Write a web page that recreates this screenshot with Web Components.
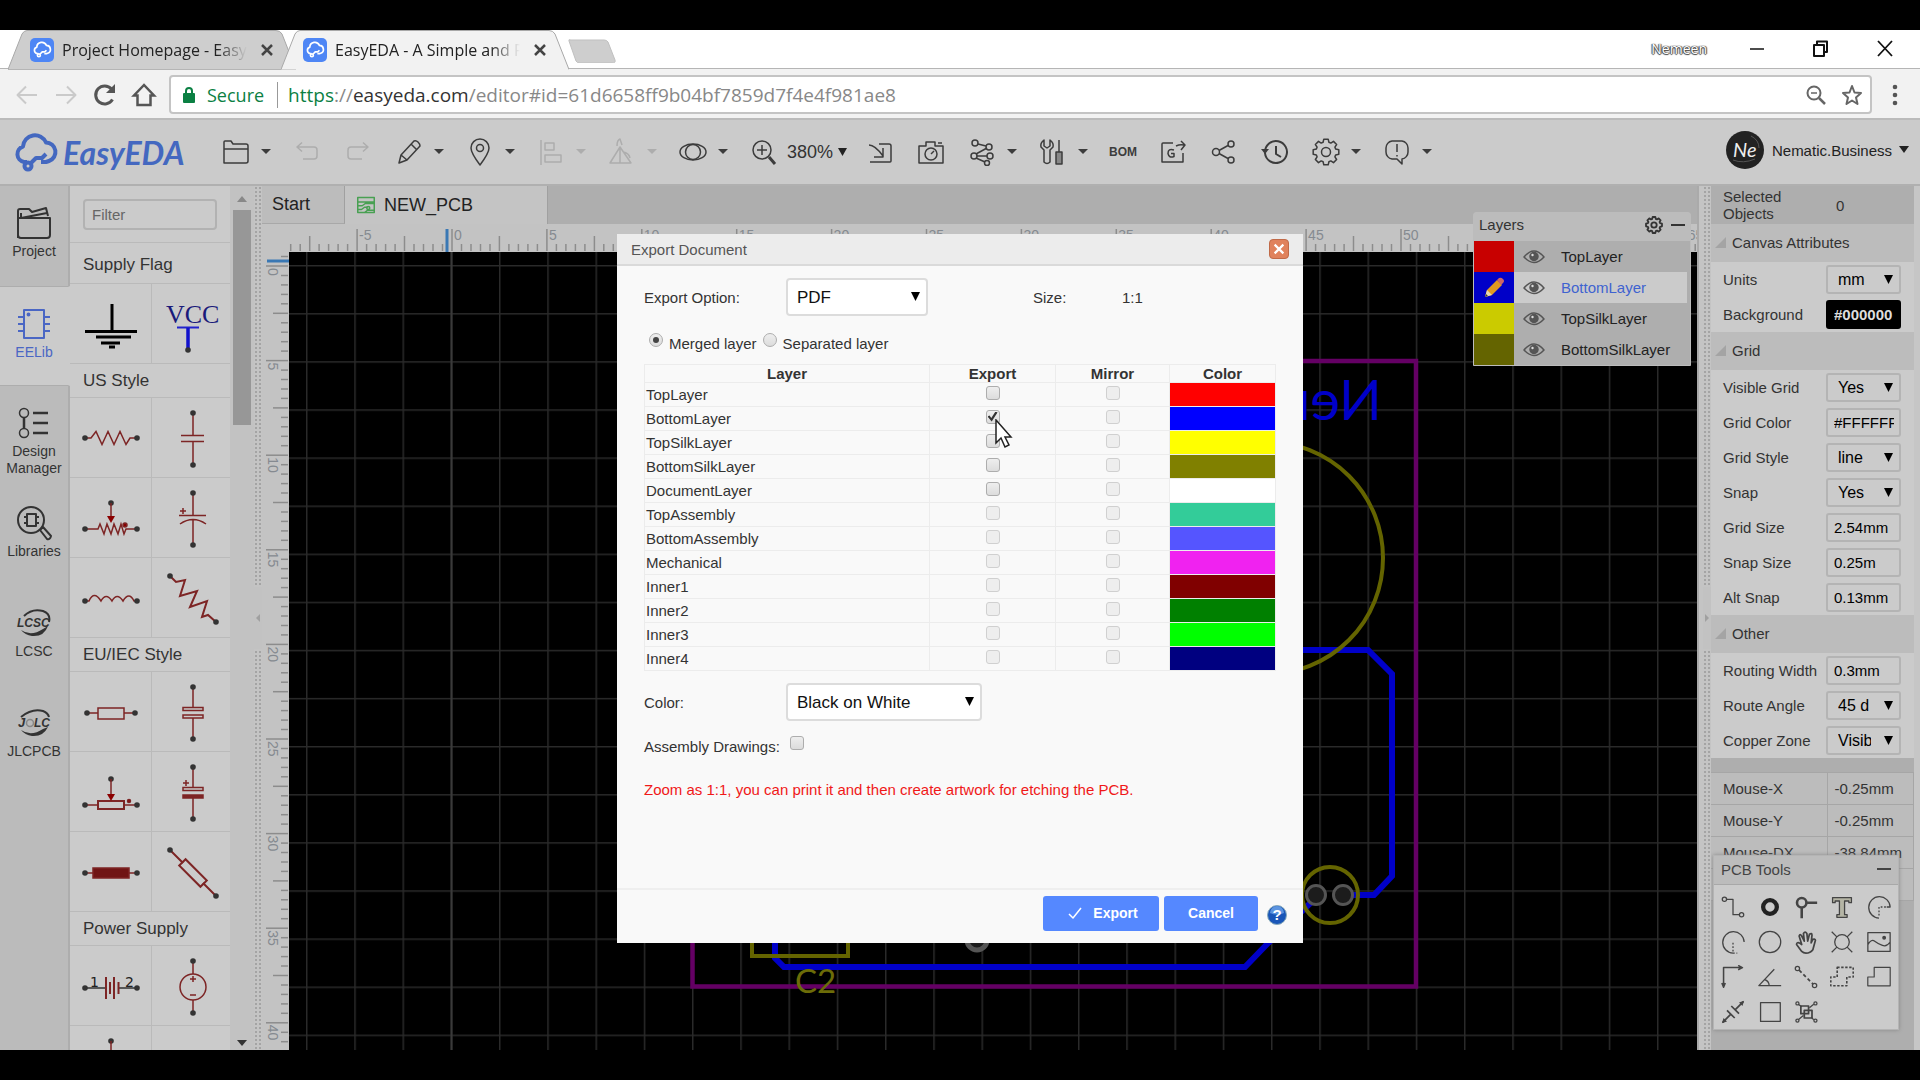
<!DOCTYPE html>
<html lang="en">
<head>
<meta charset="utf-8">
<title>EasyEDA - A Simple and Powerful Electronic Circuit Design Tool</title>
<style>
  html, body { height: 100%; margin: 0; background: #000; }
  body { font-family: "Liberation Sans", Arial, sans-serif; font-size: 15px; color: #333; }
</style>
</head>
<body>
<easy-app></easy-app>
<script>
const BASE = `<style>
  :host, *, *::before, *::after { box-sizing: border-box; }
  button, input, select { font: inherit; color: inherit; margin: 0; }
  button { background: none; border: 0; padding: 0; display: flex; align-items: center; }
  svg { display: block; }
</style>`;

function define(name, render, ready) {
  customElements.define(name, class extends HTMLElement {
    connectedCallback() {
      if (this.shadowRoot) return;
      this.attachShadow({ mode: "open" }).innerHTML = BASE + render(this);
      if (ready) ready(this, this.shadowRoot);
    }
  });
}

/* ---------- icons ---------- */
const gear = (r, c) => {
  let d = "";
  for (let i = 0; i < 8; i++) {
    [[-0.29, r * 0.78], [-0.17, r], [0.17, r], [0.29, r * 0.78]].forEach(([o, q]) => {
      const a = i * Math.PI / 4 + o;
      d += (d ? "L" : "M") + (c + q * Math.sin(a)).toFixed(2) + " " + (c - q * Math.cos(a)).toFixed(2);
    });
  }
  return d + "Z";
};
const cloud = `<path d="M13 30H10a8 8 0 0 1-1-15.500a12 12 0 0 1 23-4a9.500 9.500 0 0 1 3 18.500l-3 1h-5"/><circle cx="14" cy="34" r="3.500"/><path d="M17 31l5-5h6l4-4" />`;
const ICONS = {
  back: [28, `<path d="M24 14H5M13 5.500L4.500 14l8.500 8.500" stroke-width="2"/>`],
  forward: [28, `<path d="M4 14h19M15 5.500l8.500 8.500l-8.500 8.500" stroke-width="2"/>`],
  reload: [28, `<path d="M21.500 18.500A9 9 0 1 1 20.500 8" stroke-width="3"/><path d="M24 3v9h-9z" fill="currentColor" stroke="none"/>`],
  home: [28, `<path d="M14 4L4 14.500h3.500V24h13v-9.500H24z" stroke-width="2.500" stroke-linejoin="miter"/>`],
  lock: [20, `<rect x="4" y="8" width="12" height="10" rx="1" fill="currentColor" stroke="none"/><path d="M7 9V6a3 3 0 0 1 6 0v3" stroke-width="2"/>`],
  lens: [24, `<circle cx="10" cy="10" r="6.500" stroke-width="2"/><path d="M15 15l6 6" stroke-width="2.500"/><path d="M7 10h6"/>`],
  star: [24, `<path d="M12 3l2.500 6.500l6.500.5l-5 4.500l1.500 6.500L12 17.500L6.500 21L8 14.500L3 10l6.500-.5z" stroke-width="2"/>`],
  dots: [24, `<g fill="currentColor" stroke="none"><circle cx="12" cy="4" r="2.300"/><circle cx="12" cy="12" r="2.300"/><circle cx="12" cy="20" r="2.300"/></g>`],
  min: [24, `<path d="M5 12h14" stroke-width="1.500"/>`],
  restore: [24, `<path d="M5 8h10v11H5zM8 8V4.500h10V15h-3" stroke-width="2"/>`],
  close: [24, `<path d="M5 4l14 15M19 4L5 19" stroke-width="1.800"/>`],
  x: [16, `<path d="M3 3l10 10M13 3L3 13" stroke-width="2.500"/>`],
  favicon: [24, `<rect width="24" height="24" rx="5" fill="#4e86f5" stroke="none"/><g transform="translate(3 3) scale(.42)" stroke="#fff" stroke-width="4">${cloud}</g>`],
  folder: [28, `<path d="M2 25V4q0-1 1-1h6l2 3h13q2 0 2 2v15q0 2-2 2zM2 11h24"/>`],
  undo: [28, `<path d="M4 9h17q3 0 3 3v6q0 3-3 3H10M9 4.500L4 9l5 4.500"/>`],
  redo: [28, `<path d="M24 9H7q-3 0-3 3v6q0 3 3 3h11M19 4.500L24 9l-5 4.500"/>`],
  pencil: [28, `<path d="M4 25l2-8L19 3q2-1 4 1t2 4L12 22zM16 6l6 6M6 17l6 5"/>`],
  pin: [28, `<path d="M14 27Q5 15 5 10a9 9 0 0 1 18 0q0 5-9 17z"/><circle cx="14" cy="10" r="3.500"/>`],
  align: [28, `<path d="M4 2v25M8 5h9v7H8zM8 17h16v7H8z"/>`],
  flip: [28, `<path d="M2 25L12 9l11 16zM12 9v16M9 8q0-6 3-7l2 6M15 14q6 1 7 6"/>`],
  eye: [28, `<ellipse cx="14" cy="14" rx="13" ry="8"/><circle cx="14" cy="14" r="7.500"/>`],
  zoom: [28, `<circle cx="12" cy="12" r="9"/><path d="M12 7v10M7 12h10"/><path d="M19 19l6 7" stroke-width="3"/>`],
  import: [28, `<path d="M3 7q6 0 14 11M17 10v9H8M13 6h10q2 0 2 2v15q0 1-1 1H4"/>`],
  camera: [28, `<path d="M2 8h7V4h9v4h8v17H2zM21 5h4"/><circle cx="14" cy="16" r="6"/><path d="M14 16l3-3"/>`],
  net: [28, `<circle cx="7" cy="5" r="3"/><circle cx="6" cy="18" r="3"/><circle cx="21" cy="9" r="3"/><circle cx="22" cy="18" r="3"/><circle cx="19" cy="25" r="2.500"/><path d="M10 6l8 2M8 16l11-6M9 18h10M8 20l9 4"/>`],
  tools: [28, `<path d="M5 2v6l3 2l3-2V2q4 3 3 7l-3 3v12q-3 3-6 0V12L2 9q-1-4 3-7z"/><path d="M20 2v12M17 14h6v12h-6z" fill="#888"/>`],
  gexport: [28, `<path d="M14 5H4q-1 0-1 1v18h21v-9M17 8q4-2 8-1M22 3l4 4l-4 5"/><path d="M15 12q-6-2-6 3.500q1 5 6 3v-3h-3"/>`],
  share: [28, `<circle cx="6" cy="14" r="3.500"/><circle cx="21" cy="6" r="3"/><circle cx="21" cy="22" r="3"/><path d="M9 12.500l9-5M9 15.500l9 5"/>`],
  history: [28, `<path d="M4 15A11 11 0 1 0 8 5.500Q4 9 4 14" stroke-width="2"/><path d="M0 11l4 5l4-5z" fill="currentColor" stroke="none"/><path d="M15 8v8l5 3" stroke-width="2"/>`],
  gear: [28, `<path d="${gear(13, 14)}"/><circle cx="14" cy="14" r="4.500"/>`],
  bubble: [28, `<path d="M9 3h10a7 7 0 0 1 6 7v4a7 7 0 0 1-6 7v5l-5-5H9a7 7 0 0 1-6-7v-4a7 7 0 0 1 6-7zM14 6v8M14 17v1.500"/>`],
  project: [36, `<path d="M2 33V6q0-2 2-2h9l3 3l14-4l2 8M5 14V8M2 13h32v17q0 3-3 3H5q-3 0-3-3M5 13l26-5" stroke-width="2"/>`],
  chip: [36, `<path d="M8 4h20v28H8zM2 11h6M2 18h6M2 25h6M28 11h6M28 18h6M28 25h6" stroke-width="2"/><circle cx="12.500" cy="8.500" r="1.200" fill="currentColor"/>`],
  design: [36, `<circle cx="8" cy="8" r="4.500"/><circle cx="8" cy="28" r="4.500"/><path d="M8 12.500v11M17 8h15M17 18h15M17 28h15" stroke-width="2.500"/>`],
  libs: [36, `<circle cx="15" cy="15" r="13" stroke-width="2"/><path d="M11 9h9v12h-9zM8 12h3M8 18h3M20 12h3M20 18h3" stroke-width="2"/><path d="M24 25l3-3l8 9q-1 4-4 3z" stroke-width="2"/>`],
  lcsc: [36, `<path d="M8 11Q16 3 27 6q8 3 6 11" stroke-width="2"/><path d="M5 25q10 7 22-1l5-3q-4 11-16 10Q9 30 5 25z" fill="currentColor" stroke="none"/><text x="1" y="22" font-size="12" font-weight="bold" font-style="italic" fill="currentColor" stroke="none">LCSC</text>`],
  jlc: [36, `<path d="M5 12Q16 3 27 6q5 2 6 6" stroke-width="2"/><path d="M5 25q10 7 22-1l5-2q-5 10-16 9Q9 30 5 25z" fill="currentColor" stroke="none"/><text x="2" y="22" font-size="13" font-weight="bold" font-style="italic" fill="currentColor" stroke="none">J</text><circle cx="14" cy="18" r="3.500" stroke="#888"/><text x="18" y="22" font-size="12" font-weight="bold" font-style="italic" fill="currentColor" stroke="none">LC</text>`],
  pcb: [24, `<g stroke="#48a052" stroke-width="2"><path d="M1 2h22v20H1zM1 8h22M1 13h6l4-3h12M1 18h5l4-3h4M10 22l4-3h9"/><circle cx="15" cy="16" r="2"/></g>`],
  lgear: [20, `<path d="${gear(9, 10)}" stroke-width="2"/><circle cx="10" cy="10" r="3" stroke-width="2"/>`],
  dash: [16, `<path d="M1 8h14" stroke-width="2"/>`],
  look: [22, `<path d="M1 11q10-12 20 0q-10 11-20 0z"/><circle cx="11" cy="10.500" r="4" fill="currentColor"/><circle cx="9.500" cy="9" r="1.200" fill="#ddd" stroke="none"/>`],
  crayon: [24, `<path d="M3 21l2-7L15 4l5 5l-10 10z" fill="#e09a20" stroke="none"/><path d="M15 4l2-2q2-1 4 1t0 4l-2 2z" fill="#c66" stroke="none"/><path d="M3 21l2-7l5 5z" fill="#e8d8b0" stroke="none"/><path d="M3 21l1-3l2 2z" fill="#333" stroke="none"/>`],
  track: [28, `<circle cx="4" cy="5" r="2.500"/><circle cx="24" cy="23" r="2.500"/><path d="M7 5h7v18h8"/>`],
  pad: [28, `<circle cx="14" cy="14" r="8" stroke-width="5" stroke="#222"/>`],
  via: [28, `<circle cx="9" cy="9" r="5.500" stroke-width="3"/><path d="M15 9h12M9 15v12" stroke-width="3"/>`],
  text: [28, `<path d="M3 3h22v6h-3V7h-5v16h3v3H8v-3h3V7H6v2H3z" fill="#b5b5a5"/>`],
  arc1: [28, `<path d="M14 27A12.500 12.500 0 1 1 27 14h-4"/><path d="M22 14h-8v11" stroke-dasharray="2 2"/>`],
  arc2: [28, `<path d="M14 27A12.500 12.500 0 1 1 27 14"/><path d="M14 15v12h5" stroke-dasharray="2 2"/>`],
  circle: [28, `<circle cx="14" cy="14" r="12.500"/>`],
  hand: [28, `<path d="M9 25L3 17q0-3 3-2l3 2L6 7q1-3 3 0l3 6l-1-9q2-3 4 0l1 9l2-8q3-2 3 1l-1 9l2-4q3-1 3 1l-3 11q-3 4-8 4q-3 0-5-2z" stroke-width="2"/>`],
  hole: [28, `<circle cx="14" cy="14" r="8.500"/><path d="M2 2l6 6M26 2l-6 6M2 26l6-6M26 26l-6-6"/>`],
  image: [28, `<path d="M1 3h26v22H1zM1 17q4-7 8-4t9 5t9-4"/><circle cx="20" cy="9" r="1.500" fill="currentColor"/>`],
  axis: [28, `<path d="M3 25V3h22M20 .5l5 2.500l-5 2.500M1 21l2 5l2-5" stroke-width="1.800"/>`],
  angle: [28, `<path d="M19 5L1 24h26M8 17q5 2 5 7"/>`],
  link: [28, `<circle cx="4" cy="4" r="2.500"/><circle cx="24" cy="24" r="2.500"/><path d="M6 6l16 16" stroke-dasharray="4 3" stroke-width="2"/>`],
  dashed: [30, `<path d="M9 3h20v12h-8v11H1V15h8z" stroke-dasharray="3 2" stroke-width="2"/>`],
  area: [30, `<path d="M9 3h20v23H1V15h8z"/>`],
  measure: [28, `<path d="M2 26l9-9M17 11l9-9M7 12l9 9M12 7l9 9" stroke-width="2"/><path d="M1 27l2-6l4 4zM27 1l-2 6l-4-4z" fill="currentColor" stroke="none"/>`],
  rect: [28, `<path d="M3 3h23v22H3z"/>`],
  group: [28, `<path d="M8 7h9v9H8zM12 12h9v9h-9z" stroke-width="2"/><path d="M5 5l4 3M23 5l-5 4M5 23l6-5M23 23l-3-3"/><g><circle cx="4" cy="4" r="1.800"/><circle cx="25" cy="4" r="1.800"/><circle cx="4" cy="24" r="1.800"/><circle cx="25" cy="24" r="1.800"/></g>`],
  check: [16, `<path d="M2 9l4 4l8-10" stroke-width="1.500"/>`]
};
define("ee-icon", el => {
  const [box, art] = ICONS[el.getAttribute("name")];
  const size = el.getAttribute("size") || box;
  return `<style>:host{display:inline-block;flex:none;width:${size}px;height:${size}px}</style>
  <svg width="${size}" height="${size}" viewBox="0 0 ${box} ${box}" fill="none" stroke="currentColor" stroke-width="1.500" stroke-linejoin="round">${art}</svg>`;
});

/* ---------- browser frame ---------- */
define("browser-tab", el => {
  const active = el.hasAttribute("active");
  return `<style>
    :host { display: grid; grid-template-columns: 100%; flex: none; width: 288px; height: 40px; margin-right: -15px; position: relative; z-index: ${active ? 2 : 1}; }
    .shape, .row { grid-area: 1 / 1; }
    .row { display: flex; align-items: center; min-width: 0; padding: 0 21px 0 22px; gap: 8px; }
    span { flex: 1; min-width: 0; overflow: hidden; white-space: nowrap; font: 16px "Open Sans", sans-serif; color: #222;
      -webkit-mask-image: linear-gradient(90deg, #000 84%, transparent); mask-image: linear-gradient(90deg, #000 84%, transparent); }
    button { color: #444; margin-left: 4px; }
  </style>
  <svg class="shape" width="288" height="40"><path d="M0 39.500L14 4Q16 .5 19 .5H268Q272 .5 274 4L288 39.500" fill="${active ? "#f2f2f2" : "#cecece"}" stroke="#a8a8a8"/>${active ? "" : `<path d="M0 39.500H288" stroke="#b5b5b5"/>`}</svg>
  <div class="row"><ee-icon name="favicon"></ee-icon><span><slot></slot></span><button aria-label="Close tab"><ee-icon name="x"></ee-icon></button></div>`;
});
define("browser-frame", () => `<style>
    :host { display: block; }
    .strip { height: 39px; background: linear-gradient(#fff 38px, #b5b5b5 38px); display: flex; align-items: flex-start; padding-left: 8px; }
    .new { margin: 9px 0 0 14px; }
    .win { margin-left: auto; display: flex; align-items: center; height: 37px; gap: 40px; color: #111; padding-right: 23px; }
    .user { font: 14px "Open Sans", sans-serif; color: #fff; text-shadow: 0 0 1px #444, 1px 0 1px #444, -1px 0 1px #444, 0 1px 1px #444; margin-right: -2px; }
    .bar { height: 51px; background: #f2f2f2; border-bottom: 2px solid #bbb; display: flex; align-items: center; padding: 2px 13px 0 13px; gap: 11px; color: #555; }
    .off { color: #cacaca; }
    .url { flex: 1; height: 39px; display: flex; align-items: center; background: #fff; border: 2px solid #c4c4c4; border-radius: 4px; padding: 0 6px 0 8px; gap: 8px; font: 18px "Open Sans", sans-serif; white-space: nowrap; color: #888; }
    .url .ok { color: #0b8043; }
    .url .dom { color: #333; }
    .sec { border-right: 1px solid #999; padding-right: 13px; margin-right: 2px; line-height: 26px; }
    .addr { flex: 1; font-size: 19px; }
    .tail { display: flex; gap: 12px; color: #666; }
  </style>
  <div class="strip">
    <browser-tab>Project Homepage - EasyEDA</browser-tab>
    <browser-tab active>EasyEDA - A Simple and Powerful</browser-tab>
    <svg class="new" width="48" height="24"><path d="M1 2L8 22Q9 24 12 24H44Q48 24 47 21L40 3Q39 1 36 1H3Q0 0 1 2z" fill="#cecece" stroke="#c0c0c0"/></svg>
    <div class="win"><span class="user">Nemeen</span><button aria-label="Minimize"><ee-icon name="min"></ee-icon></button><button aria-label="Restore"><ee-icon name="restore"></ee-icon></button><button aria-label="Close"><ee-icon name="close"></ee-icon></button></div>
  </div>
  <div class="bar">
    <button class="off" aria-label="Back"><ee-icon name="back"></ee-icon></button>
    <button class="off" aria-label="Forward"><ee-icon name="forward"></ee-icon></button>
    <button aria-label="Reload"><ee-icon name="reload"></ee-icon></button>
    <button aria-label="Home"><ee-icon name="home"></ee-icon></button>
    <div class="url"><ee-icon class="ok" name="lock"></ee-icon><span class="sec ok">Secure</span><span class="addr"><span class="ok">https</span>://<span class="dom">easyeda.com</span>/editor#id=61d6658ff9b04bf7859d7f4e4f981ae8</span>
      <span class="tail"><ee-icon name="lens"></ee-icon><ee-icon name="star"></ee-icon></span></div>
    <button aria-label="Menu"><ee-icon name="dots"></ee-icon></button>
  </div>`);

/* ---------- editor tool bar ---------- */
define("tool-button", el => `<style>
    :host { display: block; color: #3c3c3c; }
    :host([off]) { color: #adadad; }
    :host([menu]) { margin-right: -2px; }
    button { height: 28px; }
    ee-icon { margin: 0 -1px; }
    .caret { margin-left: 12px; }
    b { font-size: 12px; width: 24px; display: flex; justify-content: center; }
  </style><button aria-label="${el.getAttribute("name")}">${el.getAttribute("name") === "BOM" ? "<b>BOM</b>" : `<ee-icon name="${el.getAttribute("name")}"></ee-icon>`}${el.hasAttribute("menu") ? `<svg class="caret" width="10" height="6"><path d="M0 0h10L5 5z" fill="currentColor"/></svg>` : ""}</button>`);
define("ee-toolbar", () => `<style>
    :host { display: flex; align-items: center; height: 66px; background: #cbcbcb; border-bottom: 2px solid #b0b0b0; padding: 0 11px 0 12px; gap: 25px; }
    .logo { display: flex; align-items: center; gap: 3px; width: 186px; color: #4468c0; font: italic bold 32px Lato, sans-serif; }
    .zoom { display: flex; align-items: center; font-size: 18px; }
    .zoom span { margin-left: 10px; }
    .zoom > svg { margin: 0 -5px 0 4px; }
    .user { margin-left: auto; display: flex; align-items: center; gap: 7px; padding-bottom: 4px; white-space: nowrap; color: #222; }
  </style>
  <div class="logo"><svg width="48" height="44" viewBox="-1 -2 46 44" fill="none" stroke="currentColor" stroke-width="4" stroke-linejoin="round">${cloud}</svg>EasyEDA</div>
  <tool-button name="folder" menu></tool-button><tool-button name="undo" off></tool-button><tool-button name="redo" off></tool-button>
  <tool-button name="pencil" menu></tool-button><tool-button name="pin" menu></tool-button><tool-button name="align" menu off></tool-button>
  <tool-button name="flip" menu off></tool-button><tool-button name="eye" menu></tool-button>
  <div class="zoom"><tool-button name="zoom"></tool-button><span>380%</span><svg width="10" height="8"><path d="M1 0h9L5.500 8z" fill="#222"/></svg></div>
  <tool-button name="import"></tool-button><tool-button name="camera"></tool-button><tool-button name="net" menu></tool-button>
  <tool-button name="tools" menu></tool-button><tool-button name="BOM"></tool-button><tool-button name="gexport"></tool-button>
  <tool-button name="share"></tool-button><tool-button name="history"></tool-button><tool-button name="gear" menu></tool-button><tool-button name="bubble" menu></tool-button>
  <button class="user"><svg width="40" height="40"><circle cx="20" cy="20" r="19" fill="#222"/><path d="M8 30Q18 34 30 29M26 6q8 4 8 12" stroke="#555" fill="none"/><text x="8" y="27" font-family="Lato" font-style="italic" font-size="20" fill="#eee">Ne</text></svg>Nematic.Business<svg width="10" height="8"><path d="M0 0h10L5 7z" fill="#222"/></svg></button>`);

/* ---------- left navigation ---------- */
define("nav-item", el => `<style>
    :host { display: flex; flex-direction: column; align-items: center; height: 100px; padding-top: 19px; text-align: center; line-height: 17px; font-size: 14px; color: #333; border-right: 2px solid #adadad; background: #bbb; }
    :host([active]) { color: #4a66c4; background: #cbcbcb; border-right-color: #cbcbcb; border-top: 1px solid #adadad; border-bottom: 1px solid #adadad; }
    ee-icon { margin-bottom: 2px; }
  </style><ee-icon name="${el.getAttribute("icon")}"></ee-icon><slot></slot>`);
define("side-nav", () => `<style>
    :host { display: flex; flex-direction: column; flex: none; width: 70px; background: #bbb; }
    .rest { flex: 1; border-right: 2px solid #adadad; }
  </style>
  <nav-item icon="project">Project</nav-item><nav-item icon="chip" active>EELib</nav-item><nav-item icon="design">Design<br>Manager</nav-item>
  <nav-item icon="libs">Libraries</nav-item><nav-item icon="lcsc">LCSC</nav-item><nav-item icon="jlc">JLCPCB</nav-item><div class="rest"></div>`);

/* ---------- schematic symbols ---------- */
const dot = (x, y) => `<circle cx="${x}" cy="${y}" r="2.800" fill="#333" stroke="none"/>`;
const ends = y => dot(6, y) + dot(58, y);
const poles = dot(34, 7) + dot(34, 59);
const plus = (x, y) => `<path d="M${x - 3} ${y}h6M${x} ${y - 3}v6"/>`;
const wiper = (y0, y1) => dot(32, y0) + `<path d="M32 ${y0}V${y1 - 5}"/><path d="M28 ${y1 - 6}h8l-4 7z" fill="#8b0000" stroke="none"/>`;
const SYMBOLS = {
  ground: `<g stroke="#000" stroke-width="3"><path d="M33 12v27M6 39.500h52M17 45h35M22 51h19M30 55h6"/></g>`,
  vcc: `<text x="7" y="31" font-family="Liberation Serif, serif" font-size="26" fill="#1a1a7a" stroke="none">VCC</text><path d="M18 35.500h22" stroke="#22c" stroke-width="2"/><path d="M29 36v22" stroke="#11c" stroke-width="3.500"/>${dot(29, 58)}`,
  res: `<path d="M6 32h6l5-6.500l6 13l6-13l6 13l6-13l6 13l4-6.500h7"/>${ends(32)}`,
  cap: `<path d="M34 7v22M34 36v23M22 29.500h23M22 35.500h23"/>${poles}`,
  pot: `<path d="M6 43h13l2-5l4 10l3-10l4 10l3-10l4 10l3-10l3 10l2-5h11"/>${wiper(17, 36)}<circle cx="46" cy="39" r="2" fill="#8b0000"/>${ends(43)}`,
  ecap: `<path d="M34 7v22M34 34v25M20 29.500h27M21 38q13-9 26 0"/>${plus(24, 25)}${poles}`,
  coil: `<path d="M6 35h4q5-11 12 0q5-9 11 0q5-9 11 0q6-10 11 0h3"/>${ends(35)}`,
  zig: `<path d="M11 10l6 6l9-2l-5 16l17-5l-7 16l17-6l-5 16l6-2l8 7" stroke-width="2"/>${dot(11, 10)}${dot(57, 56)}`,
  eres: `<path d="M8 33h11M45 33h11"/><path d="M19 28h26v11H19z"/>${dot(8, 33)}${dot(56, 33)}`,
  eucap: `<path d="M34 7v20M34 38v21M24 27.500h20v3H24zM24 35h20v3H24z"/>${poles}`,
  eupot: `<path d="M6 45h12M46 45h12"/><path d="M19 41h26v8H19z" stroke-width="2"/>${wiper(19, 40)}<circle cx="50" cy="41" r="1.500" fill="#8b0000"/>${ends(45)}`,
  euecap: `<path d="M34 7v20M34 38v21M24 27.500h20v3H24z"/><path d="M24 35h20v3H24z" fill="#7d2525"/>${plus(27, 23)}${poles}`,
  fuse: `<path d="M6 33h52"/><path d="M14 28h36v10H14z" fill="#701515"/>${ends(33)}`,
  diag: `<path d="M11 10l13 13M44 43l13 13" stroke-width="2"/><path d="M19 28.500h30v9H19z" transform="rotate(45 34 33)" stroke-width="2"/>${dot(11, 10)}${dot(57, 56)}`,
  battery: `<path d="M6 34h20M40 34h18" stroke="#333"/><path d="M27 23v22M31 28v12M35 23v22M39.500 28v12" stroke-width="2"/><g font-family="DejaVu Sans" font-size="14" fill="#222" stroke="none"><text x="11" y="33">1</text><text x="46" y="33">2</text></g>${ends(34)}`,
  source: `<circle cx="34" cy="33" r="13"/><path d="M34 7v13M34 46v13M31 41h6"/>${plus(34, 25)}${poles}`,
  stub: `${dot(32, 7)}<path d="M32 7v50"/>`,
  none: ``
};
define("lib-section", el => {
  const tall = el.hasAttribute("tall");
  return `<style>
    :host { display: block; }
    h3 { margin: 0; height: ${tall ? 41 : 34}px; padding-left: 13px; font-size: 17px; font-weight: normal; line-height: ${tall ? 44 : 34}px; border-bottom: 1px solid #bababa; }
    .cells { display: grid; grid-template-columns: 82px 1fr; }
    .cells div { height: 80px; display: grid; place-items: center; border-bottom: 1px solid #bababa; }
    .cells div:nth-child(odd) { border-right: 1px solid #bababa; }
  </style><h3>${el.getAttribute("heading")}</h3><div class="cells">${el.getAttribute("parts").split(" ").map(p =>
    `<div><svg width="64" height="64" viewBox="0 0 64 64" fill="none" stroke="#7d2525" stroke-width="1.500" overflow="visible">${SYMBOLS[p]}</svg></div>`).join("")}</div>`;
});
define("split-bar", el => `<style>
    :host { display: flex; flex: none; width: 8px; align-items: center; background: radial-gradient(#a4a4a4 1px, transparent 1.500px) 0 0 / 4px 4px #c4c4c4; }
    div { width: 100%; height: 62px; background: #c2c2c2; display: grid; place-items: center; }
  </style><div><svg width="4" height="8"><path d="${el.hasAttribute("right") ? "M0 0l4 4l-4 4z" : "M4 0L0 4l4 4z"}" fill="#a0a0a0"/></svg></div>`);
define("lib-panel", () => `<style>
    :host { display: flex; flex: none; width: 184px; background: #cbcbcb; }
    .list { flex: 1; overflow: hidden; }
    .find { padding: 13px 13px 12px; border-bottom: 1px solid #bababa; }
    input { width: 100%; height: 31px; padding: 0 7px; border: 2px solid #b2b2b2; border-radius: 4px; background: #cbcbcb; display: block; }
    input::placeholder { color: #666; opacity: 1; }
    .scroll { width: 24px; background: #c2c2c2; display: flex; flex-direction: column; align-items: center; padding: 10px 3px 4px; }
    .thumb { width: 18px; height: 215px; background: #979797; margin: 8px 0 auto; }
  </style>
  <div class="list"><div class="find"><input type="text" placeholder="Filter" aria-label="Filter"></div>
    <lib-section tall heading="Supply Flag" parts="ground vcc"></lib-section>
    <lib-section heading="US Style" parts="res cap pot ecap coil zig"></lib-section>
    <lib-section heading="EU/IEC Style" parts="eres eucap eupot euecap fuse diag"></lib-section>
    <lib-section heading="Power Supply" parts="battery source stub none"></lib-section></div>
  <div class="scroll"><svg width="10" height="6"><path d="M5 0l5 6H0z" fill="#888"/></svg><div class="thumb"></div><svg width="10" height="6"><path d="M0 0h10L5 6z" fill="#333"/></svg></div>`);

/* ---------- board editor ---------- */
function ticks(zero, step, vertical) {
  const end = vertical ? innerHeight - 286 : innerWidth - 512;
  let out = "";
  for (let i = -19; zero + i * step / 10 < end; i++) {
    const p = zero + i * step / 10;
    if (p < 0) continue;
    const len = i % 10 === 0 ? 22 : i % 5 === 0 ? 15 : 7;
    out += vertical ? `<path d="M${26 - len} ${p.toFixed(1)}H26"/>` : `<path d="M${p.toFixed(1)} ${27 - len}V27"/>`;
    if (i % 10 === 0) out += vertical
      ? `<text transform="translate(6 ${(p + 2).toFixed(1)}) rotate(90)">${i / 2}</text>`
      : `<text x="${(p + 2).toFixed(1)}" y="16">${i / 2}</text>`;
  }
  return out;
}
define("pcb-board", () => `<style>
    :host { display: grid; grid-template: 28px minmax(0, 1fr) / 27px minmax(0, 1fr); background: #c3c3c3; overflow: hidden; }
    svg { width: 100%; height: 100%; overflow: hidden; }
    .rule { stroke: #8c8c8c; stroke-width: 1.500; }
    .rule text { stroke: none; fill: #858a90; font-size: 14px; }
    .board { background: #000; }
    .stage { overflow: hidden; min-height: 0; }
  </style>
  <div></div>
  <div class="stage"><svg class="rule">${ticks(163, 94.9, false)}<path d="M158 5V28" stroke="#3a78b4" stroke-width="3"/></svg></div>
  <div class="stage"><svg class="rule">${ticks(14, 94.6, true)}<path d="M5 9H27" stroke="#3a78b4" stroke-width="3"/></svg></div>
  <div class="stage"><svg class="board">
    <defs><pattern id="g" x="17" y="13" width="48.250" height="48.100" patternUnits="userSpaceOnUse"><path d="M0 .75H49M.75 0V49" stroke="#2a2a2a" stroke-width="1.500" fill="none"/></pattern></defs>
    <rect width="100%" height="100%" fill="url(#g)"/>
    <path d="M162.500 0V2000" stroke="#3a3a3a" stroke-width="2"/>
    <g fill="none">
      <path d="M403.500 109H1127V734.500H403.500z" stroke="#640064" stroke-width="4.500"/>
      <g stroke="#0000c8" stroke-width="6"><path d="M800 398H1079L1103 422V624L1085 643H1060M1030 643L979 691"/><path d="M486 680V706L495 715H956L982 688"/></g>
      <g stroke="#646400" stroke-width="4"><circle cx="978" cy="306" r="116"/><circle cx="1041" cy="643" r="28"/><path d="M463 650V704H559V650"/></g>
      <g stroke="#555" fill="#1c1c1c" stroke-width="3"><circle cx="1027" cy="643" r="9.500"/><circle cx="1054" cy="643" r="9.500"/><circle cx="688" cy="688" r="10" stroke-width="5"/></g>
    </g>
    <g font-family="Lato, sans-serif"><text x="506" y="741" font-size="33" fill="#6c6c08">C2</text>
      <text transform="translate(1093 168) scale(-1 1)" font-size="56" fill="#0000c8">Nem</text></g>
  </svg></div>`);
define("layers-panel", () => `<style>
    :host { display: block; width: 218px; background: #aeaeae; border: 1px solid #bcbcbc; border-radius: 4px 4px 0 0; }
    header { display: flex; align-items: center; height: 29px; background: #bcbcbc; padding: 0 5px 4px 6px; gap: 7px; margin: -1px -1px 0; border-radius: 4px 4px 0 0; }
    header span { flex: 1; }
    .row { display: grid; grid-template-columns: 40px 40px 1fr; align-items: center; height: 31px; color: #222; margin-right: 3px; }
    .row > div { height: 31px; display: grid; place-items: center; }
    .row ee-icon { justify-self: center; }
    .row.on { background: #cbcbcb; color: #3f63d0; }
    .eye { color: #555; }
    .row span { padding-left: 7px; }
  </style><header><span>Layers</span><ee-icon name="lgear" size="18"></ee-icon><ee-icon name="dash"></ee-icon></header>
  ${[["#c80000", "TopLayer"], ["#0000c8", "BottomLayer"], ["#cbcb00", "TopSilkLayer"], ["#646400", "BottomSilkLayer"]].map(([c, n], i) =>
    `<div class="row${i === 1 ? " on" : ""}"><div style="background:${c}">${i === 1 ? `<ee-icon name="crayon"></ee-icon>` : ""}</div><ee-icon class="eye" name="look"></ee-icon><span>${n}</span></div>`).join("")}`);
define("board-editor", () => `<style>
    :host { flex: 1; min-width: 0; display: grid; grid-template-rows: 38px minmax(0, 1fr); position: relative; border-right: 2px solid #aaa; }
    .tabs { display: flex; background: #aeaeae; font-size: 18px; color: #222; }
    .tab { display: flex; align-items: center; gap: 16px; padding: 0 34px 0 10px; background: #bcbcbc; border-right: 1px solid #a0a0a0; border-bottom: 1px solid #a8a8a8; }
    .tab.on { background: #c4c4c4; padding: 0 74px 0 12px; border-bottom: 0; }
    .tab ee-icon { margin-right: -7px; }
    layers-panel { position: absolute; right: 6px; top: 26px; }
  </style>
  <div class="tabs"><button class="tab">Start</button><button class="tab on"><ee-icon name="pcb" size="18"></ee-icon>NEW_PCB</button></div>
  <pcb-board></pcb-board><layers-panel></layers-panel>`);

/* ---------- property panel ---------- */
const arrow = `<svg class="arrow" width="9" height="10"><path d="M0 0h9L4.500 9z" fill="currentColor"/></svg>`;
const FIELD = `<style>
  .pick { display: grid; }
  .pick > * { grid-area: 1 / 1; }
  .pick select { appearance: none; -webkit-appearance: none; width: 100%; border-radius: 3px; outline: 0; }
  .pick .arrow { place-self: center end; margin-right: 8px; pointer-events: none; color: #000; }
</style>`;
define("props-section", el => {
  const rows = el.getAttribute("rows").split(";").map((r, i) => {
    const [label, kind, value] = r.split("|");
    const id = "f" + i;
    const field = kind === "s" ? `<div class="pick"><select id="${id}"><option>${value}</option></select>${arrow}</div>`
      : `<input id="${id}" type="text" value="${value}" class="${kind}">`;
    return `<div class="row"><label for="${id}">${label}</label>${field}</div>`;
  }).join("");
  return FIELD + `<style>
    :host { display: block; width: 203px; background: #cbcbcb; }
    h4 { margin: 0; height: 38px; display: flex; align-items: center; gap: 6px; padding: 0 0 1px 4px; font-weight: normal; font-size: 15px; background: #bcbcbc; }
    .row { display: grid; grid-template-columns: 1fr 75px; align-items: center; height: 35px; padding: 0 13px 0 12px; white-space: nowrap; }
    input, select { height: 29px; width: 75px; border: 2px solid #b4b4b4; border-radius: 3px; background: #cbcbcb; color: #000; }
    input { padding: 0 5px 0 6px; }
    .k { background: #000; color: #ddd; border-color: #000; font-weight: bold; }
    .pick select { padding: 0 28px 0 10px; font-size: 16px; }
  </style><h4><svg width="11" height="11"><path d="M0 11L11 0V11z" fill="#a4a4a4"/></svg>${el.getAttribute("heading")}</h4>${rows}`;
});
define("pcb-tools", () => `<style>
    :host { display: block; width: 186px; background: #cbcbcb; border: 1px solid #b4b4b4; box-shadow: 0 0 4px #888; color: #444; }
    header { display: flex; align-items: center; justify-content: space-between; height: 29px; padding: 0 6px 2px 7px; background: #bcbcbc; border-bottom: 1px solid #a8a8a8; }
    .grid { display: grid; grid-template-columns: repeat(5, 1fr); justify-items: center; padding: 4px 1px 0; }
    button { height: 35px; }
  </style><header><span>PCB Tools</span><ee-icon name="dash"></ee-icon></header>
  <div class="grid">${"track pad via text arc1 arc2 circle hand hole image axis angle link dashed area measure rect group".split(" ").map(n => `<button aria-label="${n}"><ee-icon name="${n}" size="24"></ee-icon></button>`).join("")}</div>`);
define("props-panel", () => `<style>
    :host { display: block; flex: none; width: 209px; background: #aeaeae; border-right: 6px solid #c6c6c6; position: relative; color: #333; overflow: hidden; }
    .sel { display: grid; grid-template-columns: 113px 1fr; align-items: center; height: 38px; padding-left: 12px; line-height: 17px; }
    table { width: 203px; margin-top: 14px; border-collapse: collapse; table-layout: fixed; }
    td { height: 32px; padding: 0 7px 0 12px; border: 1px solid #a6a6a6; background: #bcbcbc; }
    td:first-child { width: 116px; border-left: 0; }
    td:last-child { padding-left: 7px; }
    pcb-tools { position: absolute; left: 2px; top: 669px; }
  </style>
  <div class="sel"><span>Selected<br>Objects</span><span>0</span></div>
  <props-section heading="Canvas Attributes" rows="Units|s|mm;Background|k|#000000"></props-section>
  <props-section heading="Grid" rows="Visible Grid|s|Yes;Grid Color|i|#FFFFFF;Grid Style|s|line;Snap|s|Yes;Grid Size|i|2.54mm;Snap Size|i|0.25m;Alt Snap|i|0.13mm"></props-section>
  <props-section heading="Other" rows="Routing Width|i|0.3mm;Route Angle|s|45 d;Copper Zone|s|Visible"></props-section>
  <table><tr><td>Mouse-X</td><td>-0.25mm</td></tr><tr><td>Mouse-Y</td><td>-0.25mm</td></tr><tr><td>Mouse-DX</td><td>-38.84mm</td></tr><tr><td></td><td></td></tr></table>
  <pcb-tools></pcb-tools>`);

/* ---------- export dialog ---------- */
const LAYERS = [["TopLayer", "#ff0000", 1], ["BottomLayer", "#0000ff", 2], ["TopSilkLayer", "#ffff00", 1], ["BottomSilkLayer", "#808000", 1],
  ["DocumentLayer", "#ffffff", 1], ["TopAssembly", "#33cc99", 0], ["BottomAssembly", "#5555ff", 0], ["Mechanical", "#f022f0", 0],
  ["Inner1", "#800000", 0], ["Inner2", "#008000", 0], ["Inner3", "#00ff00", 0], ["Inner4", "#000080", 0]];
define("export-dialog", () => FIELD + `<style>
    :host { display: block; width: 686px; background: #f9f9f9; color: #333; pointer-events: auto; }
    header { display: flex; align-items: center; justify-content: space-between; height: 32px; padding: 0 14px; background: #ececec; border-bottom: 2px solid #dadada; color: #555; }
    header button { width: 20px; height: 20px; background: #e0825c; border: 1px solid #c06a48; border-radius: 4px; color: #fff; justify-content: center; }
    .body { min-height: 622px; padding: 12px 27px 0; }
    .row { display: grid; grid-template-columns: 142px auto 105px 89px 1fr; align-items: center; justify-content: start; height: 38px; }
    .pick select { height: 38px; background: #fff; border: 2px solid #dcdcdc; border-radius: 4px; color: #111; font-size: 17px; padding: 0 24px 0 9px; }
    .size { grid-column: 4; }
    .mode { display: flex; align-items: center; height: 48px; padding: 6px 0 0 5px; gap: 6px; }
    input[type=radio], input[type=checkbox] { appearance: none; -webkit-appearance: none; width: 14px; height: 14px; border: 1px solid #adadad; border-radius: 3px; background: linear-gradient(#eee, #dcdcdc); display: grid; place-items: center; margin: 0 auto; }
    input[type=radio] { border-radius: 50%; margin: 0 0 6px 0; }
    input[type=radio]:checked::before { content: ""; width: 6px; height: 6px; border-radius: 50%; background: #444; }
    input[type=checkbox]:disabled { border-color: #d0d0d0; background: #eee; }
    input[type=checkbox]:checked::before { content: ""; width: 10px; height: 10px; background: #333; clip-path: polygon(0 50%, 20% 40%, 38% 65%, 80% 0, 100% 10%, 42% 100%); }
    table { width: 100%; border-collapse: collapse; table-layout: fixed; }
    th, td { border: 1px solid #ececec; padding: 0 1px; }
    th { height: 18px; line-height: 17px; color: #333; }
    td { height: 24px; line-height: 22px; }
    td input { position: relative; top: -2px; }
    .set { margin-top: 12px; }
    .asm { display: flex; align-items: center; gap: 10px; margin-top: 14px; height: 22px; }
    .asm input { margin: 0 0 6px; }
    p { margin: 23px 0 0; line-height: 20px; color: #f01818; }
    footer { display: flex; justify-content: flex-end; align-items: center; gap: 5px; height: 55px; padding: 0 16px 7px 0; border-top: 2px solid #efefef; }
    footer button { height: 35px; background: #5588ff; color: #fff; font-weight: bold; font-size: 14px; border-radius: 3px; justify-content: center; gap: 10px; width: 94px; }
    footer .go { width: 116px; padding-left: 3px; }
    footer svg { margin: 4px 0 0 4px; }
  </style>
  <header><span>Export Document</span><button aria-label="Close"><ee-icon name="x" size="14"></ee-icon></button></header>
  <div class="body">
    <div class="row"><label for="opt">Export Option:</label><div class="pick" style="width:142px"><select id="opt"><option>PDF</option></select>${arrow}</div><span class="size">Size:</span><span>1:1</span></div>
    <div class="mode"><input type="radio" name="m" id="m1" checked><label for="m1">Merged layer</label><input type="radio" name="m" id="m2"><label for="m2">Separated layer</label></div>
    <table><colgroup><col><col style="width:126px"><col style="width:114px"><col style="width:106px"></colgroup>
      <tr><th>Layer</th><th>Export</th><th>Mirror</th><th>Color</th></tr>
      ${LAYERS.map(([n, c, s]) => `<tr><td>${n}</td><td><input type="checkbox" aria-label="Export ${n}"${s === 2 ? " checked" : s ? "" : " disabled"}></td><td><input type="checkbox" aria-label="Mirror ${n}" disabled></td><td style="background:${c}"></td></tr>`).join("")}
    </table>
    <div class="row set"><label for="col">Color:</label><div class="pick" style="width:196px"><select id="col"><option>Black on White</option></select>${arrow}</div></div>
    <div class="asm"><label for="asm">Assembly Drawings:</label><input type="checkbox" id="asm"></div>
    <p>Zoom as 1:1, you can print it and then create artwork for etching the PCB.</p>
  </div>
  <footer><button class="go"><ee-icon name="check"></ee-icon>Export</button><button>Cancel</button>
    <svg width="20" height="20"><circle cx="10" cy="10" r="9.500" fill="#1a56b8" stroke="#8ab"/><path d="M3 8a7 7 0 0 1 14 0q-7 3-14 0z" fill="#5c94e0"/><text x="10" y="15" text-anchor="middle" font-size="15" font-weight="bold" fill="#fff">?</text></svg></footer>`);

/* ---------- page ---------- */
define("easy-app", () => `<style>
    :host { display: flex; flex-direction: column; height: 100vh; padding: 30px 0; position: relative; overflow: hidden; }
    main { flex: 1; min-height: 0; display: flex; overflow: hidden; background: #c4c4c4; }
    .strip { margin-left: 4px; }
    .modal { position: absolute; inset: 127px 0 30px; display: grid; place-items: center; pointer-events: none; }
    .cursor { position: absolute; left: calc(50% + 34px); top: 419px; }
  </style>
  <browser-frame></browser-frame>
  <ee-toolbar></ee-toolbar>
  <main><side-nav></side-nav><lib-panel></lib-panel><split-bar></split-bar><board-editor></board-editor><split-bar right class="strip"></split-bar><props-panel></props-panel></main>
  <div class="modal"><export-dialog></export-dialog></div>
  <svg class="cursor" width="20" height="30"><path d="M2 1V24L7 19L11 28L15 26L11 18H17z" fill="#fff" stroke="#222" stroke-width="1.500"/></svg>`);
</script>
</body>
</html>
